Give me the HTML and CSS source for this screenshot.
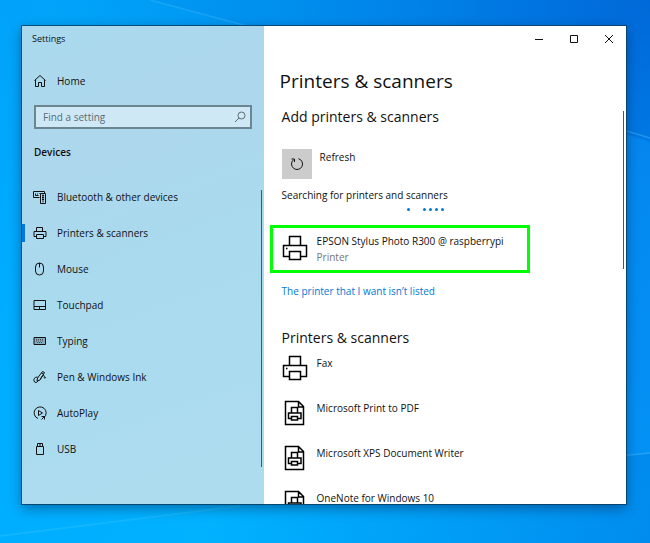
FILE: index.html
```html
<!DOCTYPE html>
<html lang="en">
<head>
<meta charset="UTF-8">
<meta name="viewport" content="width=device-width,initial-scale=1">
<title>Settings</title>
<link rel="stylesheet" href="styles.css">
</head>
<body>
<svg class="wallpaper" viewBox="0 0 650 543" preserveAspectRatio="none" aria-hidden="true">
  <path d="M150 0L262 30H650V0z" fill="#0078e0" opacity=".1"/>
  <path d="M150 0L262 30" stroke="#4cc0ff" stroke-width="1.5" opacity=".3"/>
  <path d="M620 132L650 142V453L620 456z" fill="#0a9bff" opacity=".4"/>
  <path d="M620 129L650 138M620 456L650 453" stroke="#4cc0ff" stroke-width="1.5" opacity=".4"/>
  <path d="M0 536L240 506" stroke="#5cd0ff" stroke-width="2" opacity=".2"/>
</svg>

<!-- shared icons -->
<svg class="sprite" aria-hidden="true">
  <symbol id="i-printer" viewBox="0 0 26 26">
    <path d="M7.500 10.500V1.500h11v9M7.500 21.500h-6v-11h23v11h-6M7.500 16.500h11v8h-11z"/>
    <path d="M4 13.500h1.500"/>
  </symbol>
  <symbol id="i-doc" viewBox="0 0 26 26">
    <path d="M3.500 1.500h13l5 5v18h-18zM16.500 1.500v5.500h5"/>
    <path d="M9.500 13V7.500h6V13M9.500 18.500h-3V13h12.500v5.500h-3.500M9.500 16.500h6v3.500h-6z"/>
  </symbol>
</svg>

<main class="window">
  <aside class="sidebar">
    <div class="app-name">Settings</div>
    <a class="nav-item home" href="#">
      <svg viewBox="0 0 14 14"><path d="M1.500 6.500L7 1.500l5.500 5M2.500 6v6.500h3V8.500h3v4h3V6"/></svg>
      Home
    </a>
    <div class="search">
      <input type="text" id="find" placeholder="Find a setting" aria-label="Find a setting">
      <svg viewBox="0 0 12 12"><circle cx="7.500" cy="4.500" r="3.500"/><path d="M5 7L1 11"/></svg>
    </div>
    <h2 class="group">Devices</h2>
    <nav class="nav">
      <a class="nav-item" href="#">
        <svg viewBox="0 0 14 14"><path d="M6.500 7.500h-6v-6h11V3M2.500 3.500v2M4.500 3.500v1M6.500 3.500h1M2.500 5.500h3M7.500 3.500h5v10h-5z"/><path d="M9 5.500h2M9 7.500h2M9 9.500h2M9.500 11.500h1" stroke-width="1.500"/></svg>
        Bluetooth &amp; other devices
      </a>
      <a class="nav-item active" href="#">
        <svg viewBox="0 0 14 14"><path d="M3.500 5.500v-4h6v4M3.500 10.500H1v-5h12v5h-2.500M3.500 8.500h7v4h-7z"/></svg>
        Printers &amp; scanners
      </a>
      <a class="nav-item" href="#">
        <svg viewBox="0 0 14 14"><rect x="2.500" y="1" width="8" height="12" rx="4"/><path d="M6.500 1v4.500"/></svg>
        Mouse
      </a>
      <a class="nav-item" href="#">
        <svg viewBox="0 0 14 14"><path d="M1 2.500h11.500v9H1zM1 8.500h11.500M6.500 8.500v3"/></svg>
        Touchpad
      </a>
      <a class="nav-item" href="#">
        <svg viewBox="0 0 14 14"><path d="M1 3.500h11.500v7H1z" fill="#86adbd"/><path d="M3 5.500h8M3 7h8M4 8.500h6" stroke-dasharray="1 1" stroke-width=".6"/></svg>
        Typing
      </a>
      <a class="nav-item" href="#">
        <svg viewBox="0 0 14 14"><path d="M4 11L4.500 8 9.500 1.500l2 1L7 10zM8.500 3l2 1M4.500 7C1.500 7 .5 9 1 11c.5 2 3 2 4 0M7.500 9C9 6 10 5 11 5.500S10.500 8 11.500 8l1.500-.5"/></svg>
        Pen &amp; Windows Ink
      </a>
      <a class="nav-item" href="#">
        <svg viewBox="0 0 14 14"><path d="M5 12.500A6 6 0 1 1 11 11.500M5.500 4.500v5l4-2.500z"/><path d="M8.500 10.500h3v3M8.500 13.500l3-3"/></svg>
        AutoPlay
      </a>
      <a class="nav-item" href="#">
        <svg viewBox="0 0 14 14"><path d="M4.500 4.500v-3h5v3M3.500 4.500h7v8h-7zM6 3h2"/></svg>
        USB
      </a>
    </nav>
    <div class="scrollbar"></div>
  </aside>

  <section class="content">
    <div class="titlebar">
      <button type="button" aria-label="Minimize"><svg viewBox="0 0 10 10"><path d="M1 5.500h8"/></svg></button>
      <button type="button" aria-label="Maximize"><svg viewBox="0 0 10 10"><path d="M1.500 1.500h7v7h-7z"/></svg></button>
      <button type="button" aria-label="Close"><svg viewBox="0 0 10 10"><path d="M1 1l8 8M9 1L1 9"/></svg></button>
    </div>
    <h1>Printers &amp; scanners</h1>
    <h2 class="add">Add printers &amp; scanners</h2>
    <div class="refresh">
      <button type="button" id="refresh" aria-labelledby="refresh-label">
        <svg viewBox="0 0 14 14"><path d="M8.500 1.700A5.500 5.500 0 1 1 3.500 2.800M1.500 2h3v3"/></svg>
      </button>
      <label id="refresh-label" for="refresh">Refresh</label>
    </div>
    <p class="searching">Searching for printers and scanners</p>
    <div class="dots"><i></i><i></i><i></i><i></i><i></i></div>
    <div class="device found">
      <svg><use href="#i-printer"/></svg>
      <div>
        <div>EPSON Stylus Photo R300 @ raspberrypi</div>
        <div class="kind">Printer</div>
      </div>
    </div>
    <a class="missing" href="#">The printer that I want isn’t listed</a>
    <h2 class="list-title">Printers &amp; scanners</h2>
    <div class="device">
      <svg><use href="#i-printer"/></svg>
      <div>Fax</div>
    </div>
    <div class="device">
      <svg><use href="#i-doc"/></svg>
      <div>Microsoft Print to PDF</div>
    </div>
    <div class="device">
      <svg><use href="#i-doc"/></svg>
      <div>Microsoft XPS Document Writer</div>
    </div>
    <div class="device">
      <svg><use href="#i-doc"/></svg>
      <div>OneNote for Windows 10</div>
    </div>
    <div class="scrollbar"></div>
  </section>
</main>
</body>
</html>
```
FILE: styles.css
```css
:root {
  --text: #111;
  --accent: #0078d7;
  --found: #00ff00;
}
* { box-sizing: border-box; }
body {
  margin: 0;
  height: 100vh;
  padding: 26px 24px 39px 22px;
  overflow: hidden;
  font: 10px/16px "Segoe UI", "Open Sans", "Noto Sans", sans-serif;
  color: var(--text);
  background:
    radial-gradient(ellipse at 100% 0, #0068d8 0, rgba(0,112,224,0.6) 25%, rgba(0,140,245,0) 65%),
    linear-gradient(180deg, rgba(0,150,240,0.4) 0%, rgba(0,150,240,0) 60%),
    linear-gradient(100deg, #00acff 0%, #00b2ff 40%, #008cee 100%);
}
h1, h2, p { margin: 0; font-weight: 400; }
svg { fill: none; stroke: currentColor; flex: none; }
button { padding: 0; border: 0; color: inherit; background: none; }
.sprite { position: absolute; width: 0; height: 0; }
.wallpaper { position: absolute; inset: 0; width: 100%; height: 100%; z-index: -1; stroke: none; }

.window {
  display: flex;
  height: 100%;
  background: #fff;
  box-shadow: 0 0 0 1px rgba(10,60,95,0.8), 0 4px 12px rgba(0,20,60,0.45);
  overflow: hidden;
}

/* left pane */
.sidebar {
  position: relative;
  flex: 0 0 40%;
  padding: 5px 12px 0;
  background: linear-gradient(160deg, #aad9ed 0%, #add7ed 25%, #a9daee 50%, #addcef 100%);
}
.app-name { margin-left: -2px; font-size: 9px; }
.nav-item {
  display: flex;
  align-items: center;
  gap: 10px;
  height: 36px;
  margin: 0 -12px;
  padding-left: 11px;
  color: inherit;
  text-decoration: none;
}
.nav-item svg { width: 14px; height: 14px; }
.home { margin-top: 16px; }
.search { position: relative; margin-top: 6px; }
.search input {
  display: block;
  width: 100%;
  height: 24px;
  padding: 0 24px 0 7px;
  border: 2px solid #6b8591;
  border-radius: 0;
  background: #cfe8f5;
  font: inherit;
  color: var(--text);
}
.search input::placeholder { color: #5b6c75; opacity: 1; }
.search svg { position: absolute; right: 6px; top: 6px; width: 12px; height: 12px; color: #5b6c75; }
.group { margin-top: 15px; font-size: 10px; font-weight: 600; }
.nav { margin-top: 19px; }
.nav .active { position: relative; }
.nav .active::before {
  content: "";
  position: absolute;
  left: 0;
  width: 3px;
  height: 18px;
  background: var(--accent);
}
.scrollbar { position: absolute; right: 2px; width: 1px; background: #555; }
.sidebar .scrollbar { top: 164px; bottom: 37px; }

/* right pane */
.content { position: relative; flex: 1; min-width: 0; padding-left: 18px; }
.content .scrollbar { top: 85px; height: 158px; }
.titlebar { display: flex; justify-content: flex-end; height: 25px; }
.titlebar button { width: 35px; height: 25px; line-height: 0; }
.titlebar svg { width: 10px; height: 10px; }
h1 { margin-top: 16px; margin-left: -2px; font-size: 19px; line-height: 28px; }
.content h2 { font-size: 14px; line-height: 20px; }
.add { margin-top: 12px; }
.refresh { display: flex; gap: 8px; margin-top: 22px; }
.refresh button { width: 30px; height: 30px; background: #ccc; line-height: 0; }
.refresh svg { width: 14px; height: 14px; }
.searching { margin-top: 8px; }
.dots { display: flex; gap: 3px; margin: 5px 0 0 125px; }
.dots i { width: 3px; height: 3px; border-radius: 50%; background: var(--accent); }
.dots i:first-child { margin-right: 10px; }
.device { display: flex; gap: 9px; height: 45px; }
.device svg { width: 26px; height: 26px; stroke: #000; stroke-width: 1.5; }
.found {
  width: 260px;
  height: 48px;
  margin: 14px 0 0 -12px;
  padding: 5px 9px;
  border: 3px solid var(--found);
}
.found svg { margin-top: 2px; }
.kind { color: #767676; }
.missing { display: block; margin-top: 10px; color: var(--accent); text-decoration: none; }
.list-title { margin: 29px 0 7px; }
```
